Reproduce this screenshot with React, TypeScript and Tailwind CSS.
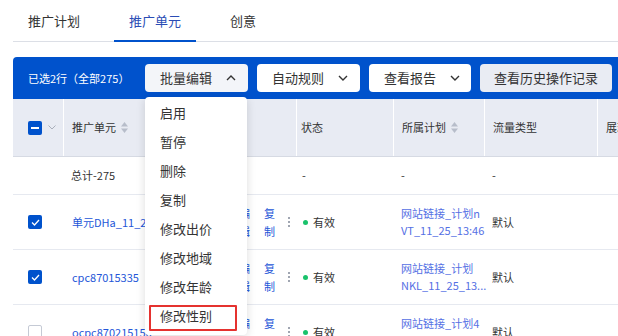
import React from "react";

const Chevron = ({ up = false }: { up?: boolean }) => (
  <svg width="10" height="6" viewBox="0 0 10 6" className="shrink-0">
    {up ? (
      <polyline points="1,5 5,1 9,5" fill="none" stroke="#333" strokeWidth="1.4" />
    ) : (
      <polyline points="1,1 5,5 9,1" fill="none" stroke="#333" strokeWidth="1.4" />
    )}
  </svg>
);

const Sort = () => (
  <svg width="7" height="11" viewBox="0 0 7 11" className="ml-[5px] shrink-0">
    <polygon points="3.5,0 7,4.5 0,4.5" fill="#b7bdca" />
    <polygon points="0,6.5 7,6.5 3.5,11" fill="#b7bdca" />
  </svg>
);

const Check = ({ state }: { state: "on" | "off" | "mixed" }) => {
  if (state === "off")
    return <div className="w-[14px] h-[14px] rounded-[2px] border border-[#c5cad5] bg-white shrink-0" />;
  return (
    <div className="w-[14px] h-[14px] rounded-[2px] bg-[#0052cc] flex items-center justify-center shrink-0">
      {state === "mixed" ? (
        <div className="w-[8px] h-[2px] bg-white" />
      ) : (
        <svg width="9" height="7" viewBox="0 0 9 7">
          <polyline points="1,3.5 3.5,6 8,1" fill="none" stroke="#fff" strokeWidth="1.3" />
        </svg>
      )}
    </div>
  );
};

const Stack = ({ a, b, cls }: { a: string; b: string; cls: string }) => (
  <div className={`flex flex-col leading-[18px] text-[11px] shrink-0 ${cls}`}>
    <span>{a}</span>
    <span>{b}</span>
  </div>
);

const DataRow = ({
  checked,
  name,
  plan1,
  plan2,
}: {
  checked: boolean;
  name: string;
  plan1: string;
  plan2: string;
}) => (
  <div className="flex h-[55px] border-b border-[#e6e9f0] text-[11px]">
    <div className="w-[50px] shrink-0 flex items-center pl-[15px]">
      <Check state={checked ? "on" : "off"} />
    </div>
    <div className="w-[233px] shrink-0 flex items-center pl-[8px] border-l border-white">
      <div className="w-[167px] shrink-0 overflow-hidden whitespace-nowrap text-[#2456d8]">{name}</div>
      <Stack a="编" b="辑" cls="w-[11px] text-[#2456d8]" />
      <Stack a="复" b="制" cls="w-[11px] ml-[14px] text-[#2456d8]" />
      <div className="ml-[13px] flex flex-col gap-[2px]">
        <div className="w-[2px] h-[2px] bg-[#a0a6b2]" />
        <div className="w-[2px] h-[2px] bg-[#a0a6b2]" />
        <div className="w-[2px] h-[2px] bg-[#a0a6b2]" />
      </div>
    </div>
    <div className="w-[97px] shrink-0 flex items-center pl-[6px] border-l border-white">
      <div className="w-[5px] h-[5px] rounded-full bg-[#19c26b]" />
      <span className="ml-[5px] text-[#333]">有效</span>
    </div>
    <div className="w-[91px] shrink-0 flex items-center pl-[8px]">
      <div className="flex flex-col leading-[17px] text-[#5570e4]">
        <span className="whitespace-nowrap">{plan1}</span>
        <span className="whitespace-nowrap">{plan2}</span>
      </div>
    </div>
    <div className="w-[113px] shrink-0 flex items-center pl-[8px] text-[#333]">默认</div>
    <div className="flex-1 min-w-0" />
  </div>
);

export default function App() {
  const items = ["启用", "暂停", "删除", "复制", "修改出价", "修改地域", "修改年龄", "修改性别"];
  return (
    <div
      className="relative w-[618px] h-[336px] overflow-hidden bg-white text-[#333]"
      style={{ fontFamily: '"Noto Sans CJK SC", "Noto Sans", sans-serif' }}
    >
      <div className="pl-[13px]">
        {/* Tabs */}
        <div className="flex h-[42px] border-b border-[#dcdfe6] gap-[19px] text-[13px]">
          <div className="px-[15px] flex items-center text-[#333]">推广计划</div>
          <div className="relative px-[15px] flex items-center text-[#2a4cb5]">
            推广单元
            <div className="absolute left-0 right-0 bottom-[-1px] h-[2px] bg-[#0052cc]" />
          </div>
          <div className="px-[15px] flex items-center text-[#333]">创意</div>
        </div>

        {/* Blue bar */}
        <div className="mt-[15px] h-[42px] bg-[#0052cc] rounded-tl-[4px] flex items-center pl-[15px]">
          <span className="text-white text-[11px] w-[117px] shrink-0 whitespace-nowrap">已选2行（全部275）</span>
          <div className="flex gap-[9px] shrink-0">
            <div className="w-[103px] h-[28px] rounded-[4px] bg-[#f3f5f9] flex items-center pl-[15px] gap-[14px] text-[13px]">
              批量编辑 <Chevron up />
            </div>
            <div className="w-[103px] h-[28px] rounded-[4px] bg-white flex items-center pl-[15px] gap-[14px] text-[13px]">
              自动规则 <Chevron />
            </div>
            <div className="w-[102px] h-[28px] rounded-[4px] bg-white flex items-center pl-[15px] gap-[14px] text-[13px]">
              查看报告 <Chevron />
            </div>
            <div className="w-[132px] h-[28px] rounded-[4px] bg-[#e9ecf3] flex items-center justify-center text-[13px]">
              查看历史操作记录
            </div>
          </div>
        </div>

        {/* Header */}
        <div className="flex h-[58px] bg-[#e8ebf3] border-b border-[#d6dae3] text-[11px]">
          <div className="w-[50px] shrink-0 flex items-center pl-[15px]">
            <Check state="mixed" />
            <svg width="8" height="5" viewBox="0 0 8 5" className="ml-[6px]">
              <polyline points="0.5,0.5 4,4 7.5,0.5" fill="none" stroke="#a9afbb" strokeWidth="1" />
            </svg>
          </div>
          <div className="w-[233px] shrink-0 flex items-center pl-[8px] border-l border-white">
            推广单元 <Sort />
          </div>
          <div className="w-[97px] shrink-0 flex items-center pl-[4px] border-l border-white">状态</div>
          <div className="w-[91px] shrink-0 flex items-center pl-[8px] border-l border-white">
            所属计划 <Sort />
          </div>
          <div className="w-[113px] shrink-0 flex items-center pl-[8px] border-l border-white">流量类型</div>
          <div className="flex-1 min-w-0 overflow-hidden flex items-center pl-[8px] border-l border-white whitespace-nowrap">
            展现
          </div>
        </div>

        {/* Total row */}
        <div className="flex h-[38px] border-b border-[#e6e9f0] text-[11px]">
          <div className="w-[50px] shrink-0" />
          <div className="w-[233px] shrink-0 flex items-center pl-[8px]">总计-275</div>
          <div className="w-[97px] shrink-0 flex items-center pl-[6px]">-</div>
          <div className="w-[91px] shrink-0 flex items-center pl-[8px]">-</div>
          <div className="w-[113px] shrink-0 flex items-center pl-[8px]">-</div>
        </div>

        <DataRow checked name="单元DHa_11_25_13:46" plan1="网站链接_计划n" plan2="VT_11_25_13:46" />
        <DataRow checked name="cpc87015335" plan1="网站链接_计划" plan2="NKL_11_25_13..." />
        <DataRow checked={false} name="ocpc870215156" plan1="网站链接_计划4" plan2="11_25_13:46" />
      </div>

      {/* Dropdown menu */}
      <div className="absolute left-[145px] top-[97px] w-[102px] bg-white rounded-[4px] shadow-[0_2px_10px_rgba(0,0,0,0.14)] pt-[1px] pb-[5px]">
        {items.map((t) => (
          <div key={t} className="h-[29px] flex items-center pl-[15px] text-[13px] text-[#333]">
            {t}
          </div>
        ))}
        <div className="absolute left-[4px] top-[208px] w-[88px] h-[26px] border-2 border-[#e5322f] rounded-[1px]" />
      </div>
    </div>
  );
}
